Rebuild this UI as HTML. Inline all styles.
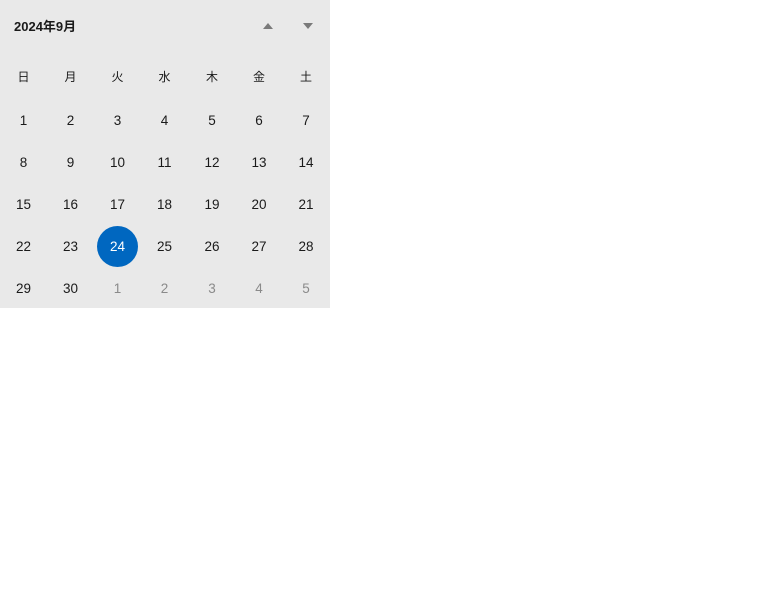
<!DOCTYPE html>
<html><head><meta charset="utf-8"><style>
body{margin:0;width:768px;height:614px;background:#fff;position:relative;font-family:"Liberation Sans","Noto Sans CJK JP",sans-serif;}
#p{position:absolute;left:0;top:0;width:330px;height:308px;background:#e9e9e9;}
.t{position:absolute;left:14px;top:18px;font-size:13px;font-weight:bold;color:#1a1a1a;line-height:18px;}
.c{position:absolute;width:40px;height:20px;margin-left:-20px;margin-top:-9px;text-align:center;line-height:20px;font-size:13.5px;color:#1a1a1a;}
.w{font-size:12px;}
.g{color:#8a8a8a;}
.sel{position:absolute;left:97px;top:226px;width:41px;height:41px;border-radius:50%;background:#0067c0;}
.tri{position:absolute;width:0;height:0;border-left:5px solid transparent;border-right:5px solid transparent;}
</style></head><body>
<div id="p">
<div class="t">2024年9月</div>
<div class="tri" style="left:263px;top:23px;border-bottom:6px solid #7a7a7a"></div>
<div class="tri" style="left:303px;top:23px;border-top:6px solid #7a7a7a"></div>
<div class="sel"></div>
<div id="g"></div>
</div>
<script>
var xs=[23.5,70.5,117.5,164.5,212,259,306],ys=[76,120,162,204,246,288];
var h="";var wd=["日","月","火","水","木","金","土"];
for(var i=0;i<7;i++)h+='<div class="c w" style="left:'+xs[i]+'px;top:'+ys[0]+'px">'+wd[i]+'</div>';
for(var d=1;d<=35;d++){var r=Math.floor((d-1)/7)+1,c=(d-1)%7;var n=d>30?d-30:d;var cls="c"+(d>30?" g":"");var st=d==24?"color:#fff;":"";
h+='<div class="'+cls+'" style="'+st+'left:'+xs[c]+'px;top:'+ys[r]+'px">'+n+'</div>';}
document.getElementById("g").innerHTML=h;
</script>
</body></html>
